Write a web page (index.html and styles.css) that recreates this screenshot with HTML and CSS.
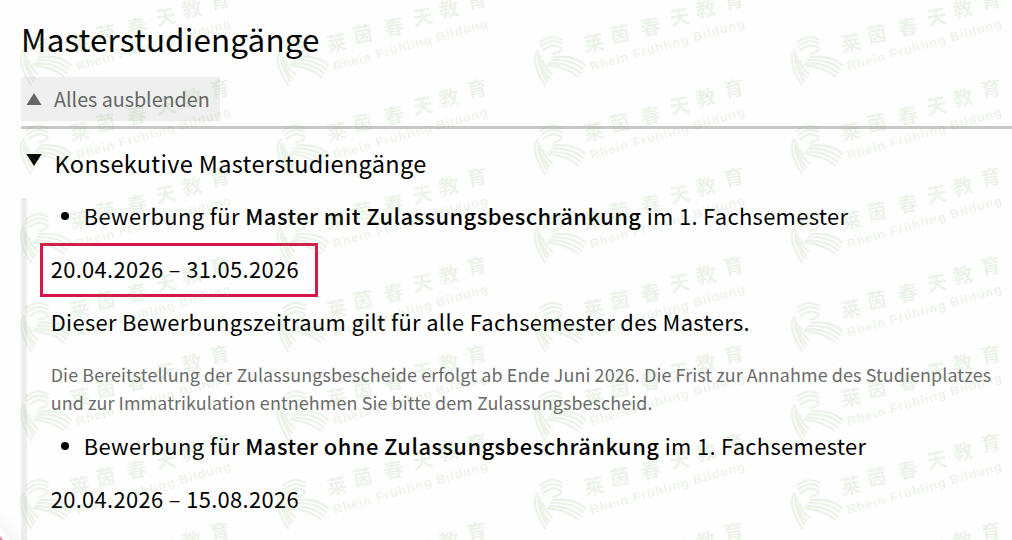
FILE: index.html
```html
<!DOCTYPE html>
<html lang="de">
<head>
<meta charset="utf-8">
<title>Masterstudiengänge</title>
<link rel="stylesheet" href="styles.css">
</head>
<body>
<div class="screen">
<main class="page">
  <h2 class="title">Masterstudiengänge</h2>
  <button class="toggle" type="button">
    <svg class="arrow" width="16" height="12" viewBox="0 0 16 12"><path d="M8 0 15.5 12H.5Z"/></svg>
    <span class="toggle-label">Alles ausblenden</span>
  </button>
  <section class="accordion">
    <h3 class="summary">
      <svg class="arrow" width="16" height="12" viewBox="0 0 16 12"><path d="M.3 0H15.7L8 12Z"/></svg>
      <span class="summary-label">Konsekutive Masterstudiengänge</span>
    </h3>
    <div class="content">
      <div class="item"><span>Bewerbung für </span><strong>Master mit Zulassungsbeschränkung</strong><span> im 1. Fachsemester</span></div>
      <p class="date marked">20.04.2026 – 31.05.2026</p>
      <p class="scope">Dieser Bewerbungszeitraum gilt für alle Fachsemester des Masters.</p>
      <p class="note">Die Bereitstellung der Zulassungsbescheide erfolgt ab Ende Juni 2026. Die Frist zur Annahme des Studienplatzes<br>und zur Immatrikulation entnehmen Sie bitte dem Zulassungsbescheid.</p>
      <div class="item"><span>Bewerbung für </span><strong>Master ohne Zulassungsbeschränkung</strong><span> im 1. Fachsemester</span></div>
      <p class="date">20.04.2026 – 15.08.2026</p>
    </div>
  </section>
</main>
<div class="badge"></div>
<svg class="watermark" width="1012" height="540" viewBox="0 0 1012 540">
  <defs>
    <g id="mark">
      <g class="mark-lines">
        <path d="M6 43Q17 33 29 40M7 47Q18 37 29 44M9 51Q19 42 28 48Q29 52 19 54"/>
        <path d="M5 50Q-5 59 12 86M6 53Q1 61 14 82M7 56Q5 65 16 79M9 60Q10 67 19 75"/>
        <path d="M19 57Q43 55 52 66M17 60Q40 59 50 70M15 63Q37 63 48 74M13 65Q34 67 45 77"/>
      </g>
      <g class="mark-cn">
        <text transform="translate(60 42) rotate(-10)">莱</text>
        <text transform="translate(86 33) rotate(-10)">茵</text>
        <text transform="translate(117 26) rotate(-10)">春</text>
        <text transform="translate(146 16) rotate(-10)">天</text>
        <text transform="translate(172 8) rotate(-10)">教</text>
        <text transform="translate(200 -1) rotate(-10)">育</text>
      </g>
      <text class="mark-latin" transform="translate(58 71) rotate(-16)" textLength="160">Rhein Frühling Bildung</text>
    </g>
    <g id="marks">
      <use href="#mark" x="19.5"/><use href="#mark" x="276.5"/><use href="#mark" x="533.5"/><use href="#mark" x="790.5"/>
    </g>
  </defs>
  <use href="#marks"/><use href="#marks" y="88.6"/><use href="#marks" y="177.2"/><use href="#marks" y="265.8"/><use href="#marks" y="354.4"/><use href="#marks" y="443"/><use href="#marks" y="531.6"/>
</svg>
</div>
</body>
</html>
```
FILE: styles.css
```css
* { box-sizing: border-box; }
body { margin: 0; }
.screen {
  height: 540px;
  position: relative;
  overflow: hidden;
  background: #fefefe;
  color: #000;
  font-family: "Noto Sans CJK SC", "Noto Sans", sans-serif;
}
h2, h3, p { margin: 0; font-weight: 400; }
.page { padding: 18px 0 0 21px; }
.title { font-size: 31.4px; line-height: 42px; height: 59px; letter-spacing: .14px; }
.toggle {
  display: flex;
  align-items: center;
  gap: 12px;
  width: 199px;
  height: 44px;
  padding: 0 0 0 5px;
  border: 0;
  background: #efefef;
  color: #666;
  font-family: inherit;
  font-size: 19.7px;
  line-height: 28px;
}
.arrow { flex: none; fill: currentColor; }
.toggle-label, .summary-label { white-space: nowrap; }
.accordion { margin-top: 5px; border-top: 3px solid #c8c8c8; }
.summary {
  display: flex;
  gap: 12.5px;
  height: 69px;
  padding: 17px 0 0 5px;
  font-size: 23.5px;
  line-height: 34px;
  letter-spacing: .34px;
}
.summary .arrow { margin-top: 8px; }
.content {
  height: 342px;
  border-left: 6px solid #ededed;
  padding-left: 23.7px;
  font-size: 21.9px;
  line-height: 35px;
  letter-spacing: .35px;
  white-space: nowrap;
}
.item { display: flex; align-items: center; padding-left: 10px; white-space: pre; }
.item::before {
  content: "";
  width: 8px;
  height: 8px;
  margin-right: 15px;
  border-radius: 50%;
  background: #000;
}
.item span:first-child { letter-spacing: .4px; }
.item strong { font-weight: 500; letter-spacing: .46px; }
.marked {
  width: 278px;
  height: 54px;
  margin: 10px 0 7px -10.7px;
  padding-left: 7.7px;
  border: 3px solid #d8164a;
  line-height: 46px;
}
.note { margin: 21px 0 12px; font-size: 17.9px; line-height: 28px; letter-spacing: .11px; color: #6a6a6a; }
.item + .date:last-child { margin-top: 18px; }
.badge {
  position: absolute;
  left: -47px;
  top: 527px;
  width: 54px;
  height: 54px;
  border-radius: 50%;
  background: #ee8ea6;
  box-shadow: 0 0 0 6px #fff, 0 0 20px 10px rgba(0, 0, 0, .06);
}
.watermark { position: absolute; left: 0; top: 0; pointer-events: none; opacity: .12; filter: blur(.6px); }
.mark-lines { fill: none; stroke: #6fb05c; stroke-width: 2.4; }
.mark-cn { fill: #6fb05c; font: 700 20px "Noto Sans CJK SC", sans-serif; text-anchor: middle; dominant-baseline: central; }
.mark-latin { fill: #6fb05c; font: 700 12.5px "Liberation Sans", sans-serif; }
```
